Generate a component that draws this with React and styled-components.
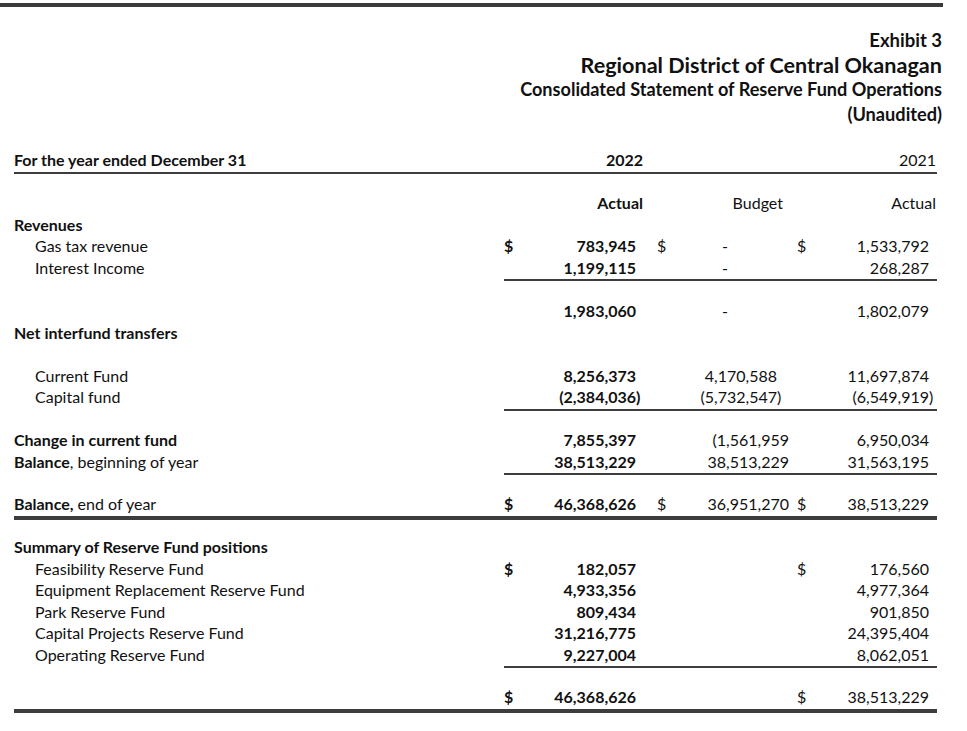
import React from 'react';
import styled, { createGlobalStyle } from 'styled-components';

const GlobalStyle = createGlobalStyle`
  body {
    margin: 0;
    background: #fff;
    color: #111;
    font-family: Lato, "Open Sans", "Liberation Sans", sans-serif;
  }
`;

const Page = styled.div`
  width: 967px;
  height: 731px;
  overflow: hidden;
`;

const TopRule = styled.div`
  margin-top: 3px;
  width: 943px;
  height: 4px;
  background: #3a3a3a;
`;

const Heading = styled.header`
  margin-top: 21px;
  padding-right: 25px;
  text-align: right;
  font-weight: 700;
  line-height: 24.5px;
`;

const HeadLine = styled.div`
  font-size: ${p => p.$size}px;
  white-space: nowrap;
`;

const Table = styled.div`
  margin: 23.25px 0 0 14px;
  width: 923px;
  font-size: 16px;
`;

const Row = styled.div`
  display: grid;
  grid-template-columns: 490px 139px 152px 142px;
  height: 21.5px;
  line-height: 21.5px;
  align-items: center;
`;

const Label = styled.div`
  padding-left: ${p => (p.$indent ? 21 : 0)}px;
  font-weight: ${p => (p.$bold ? 700 : 400)};
  white-space: nowrap;
`;

const Amount = styled.div`
  display: flex;
  align-items: center;
  padding: 0 ${p => p.$pr}px 0 ${p => p.$pl}px;
  font-weight: ${p => (p.$bold ? 700 : 400)};
  white-space: nowrap;
`;

const Dollar = styled.span`
  width: 12px;
`;

const Value = styled.span`
  flex: 1;
  text-align: ${p => (p.$center ? 'center' : 'right')};
`;

const Hang = styled.span`
  display: inline-block;
  width: 0;
`;

const Rule = styled.div`
  margin-top: ${p => p.$gap}px;
  margin-left: ${p => (p.$partial ? 490 : 0)}px;
  height: ${p => (p.$thick ? 4 : 2)}px;
  background: #3d3d3d;
`;

const Spacer = styled.div`
  height: ${p => p.$h}px;
`;

const columns = [
  { pl: 0, pr: 7 },
  { pl: 14, pr: 6 },
  { pl: 2, pr: 8 },
];

const dash = { v: '-', c: true, pr: 14 };

const rows = [
  { label: 'For the year ended December 31', bold: true, cells: [{ v: '2022', b: true, pr: 0 }, null, { v: '2021', pr: 1 }], rule: { gap: 1 }, after: 18.5 },
  { label: '', cells: [{ v: 'Actual', b: true, pr: 0 }, { v: 'Budget', pr: 12 }, { v: 'Actual', pr: 1 }] },
  { label: 'Revenues', bold: true },
  { label: 'Gas tax revenue', indent: true, cells: [{ v: '783,945', d: true, b: true }, { ...dash, d: true }, { v: '1,533,792', d: true }] },
  { label: 'Interest Income', indent: true, cells: [{ v: '1,199,115', b: true }, dash, { v: '268,287' }], rule: { gap: 1, partial: true }, after: 19 },
  { label: '', cells: [{ v: '1,983,060', b: true }, dash, { v: '1,802,079' }] },
  { label: 'Net interfund transfers', bold: true, after: 21.5 },
  { label: 'Current Fund', indent: true, cells: [{ v: '8,256,373', b: true }, { v: '4,170,588', pr: 18 }, { v: '11,697,874' }] },
  { label: 'Capital fund', indent: true, cells: [{ v: '(2,384,036)', b: true }, { v: '(5,732,547)', pr: 18 }, { v: '(6,549,919)' }], rule: { gap: 1, partial: true }, after: 18.5 },
  { label: 'Change in current fund', bold: true, cells: [{ v: '7,855,397', b: true }, { v: '(1,561,959' }, { v: '6,950,034' }] },
  { label: [['Balance', true], [', beginning of year', false]], cells: [{ v: '38,513,229', b: true }, { v: '38,513,229' }, { v: '31,563,195' }], rule: { gap: 1, partial: true }, after: 18 },
  { label: [['Balance,', true], [' end of year', false]], cells: [{ v: '46,368,626', d: true, b: true }, { v: '36,951,270', d: true }, { v: '38,513,229', d: true }], rule: { gap: 1, thick: true }, after: 16.5 },
  { label: 'Summary of Reserve Fund positions', bold: true },
  { label: 'Feasibility Reserve Fund', indent: true, cells: [{ v: '182,057', d: true, b: true }, null, { v: '176,560', d: true }] },
  { label: 'Equipment Replacement Reserve Fund', indent: true, cells: [{ v: '4,933,356', b: true }, null, { v: '4,977,364' }] },
  { label: 'Park Reserve Fund', indent: true, cells: [{ v: '809,434', b: true }, null, { v: '901,850' }] },
  { label: 'Capital Projects Reserve Fund', indent: true, cells: [{ v: '31,216,775', b: true }, null, { v: '24,395,404' }] },
  { label: 'Operating Reserve Fund', indent: true, cells: [{ v: '9,227,004', b: true }, null, { v: '8,062,051' }], rule: { gap: 0.5, partial: true }, after: 18 },
  { label: '', cells: [{ v: '46,368,626', d: true, b: true }, null, { v: '38,513,229', d: true }], rule: { gap: 2, thick: true } },
];

function AmountCell({ cell, col }) {
  if (!cell) return <Amount $pl={col.pl} $pr={col.pr} />;
  const closes = cell.v.endsWith(')');
  const text = closes ? cell.v.slice(0, -1) : cell.v;
  return (
    <Amount $pl={col.pl} $pr={cell.pr ?? col.pr} $bold={cell.b}>
      <Dollar>{cell.d ? '$' : ''}</Dollar>
      <Value $center={cell.c}>
        {text}
        {closes && <Hang>)</Hang>}
      </Value>
    </Amount>
  );
}

function RowLabel({ row }) {
  if (Array.isArray(row.label)) {
    return (
      <Label>
        {row.label.map(([t, b]) => (b ? <b key={t}>{t}</b> : <span key={t}>{t}</span>))}
      </Label>
    );
  }
  return <Label $bold={row.bold} $indent={row.indent}>{row.label}</Label>;
}

export default function App() {
  return (
    <Page>
      <GlobalStyle />
      <TopRule />
      <Heading>
        <HeadLine $size={18.5}>Exhibit 3</HeadLine>
        <HeadLine $size={21.6}>Regional District of Central Okanagan</HeadLine>
        <HeadLine $size={18.1}>Consolidated Statement of Reserve Fund Operations</HeadLine>
        <HeadLine $size={18.2}>(Unaudited)</HeadLine>
      </Heading>
      <Table>
        {rows.map((row, i) => (
          <React.Fragment key={i}>
            <Row>
              <RowLabel row={row} />
              {columns.map((col, j) => (
                <AmountCell key={j} col={col} cell={row.cells ? row.cells[j] : null} />
              ))}
            </Row>
            {row.rule && <Rule $gap={row.rule.gap} $partial={row.rule.partial} $thick={row.rule.thick} />}
            {row.after && <Spacer $h={row.after} />}
          </React.Fragment>
        ))}
      </Table>
    </Page>
  );
}
